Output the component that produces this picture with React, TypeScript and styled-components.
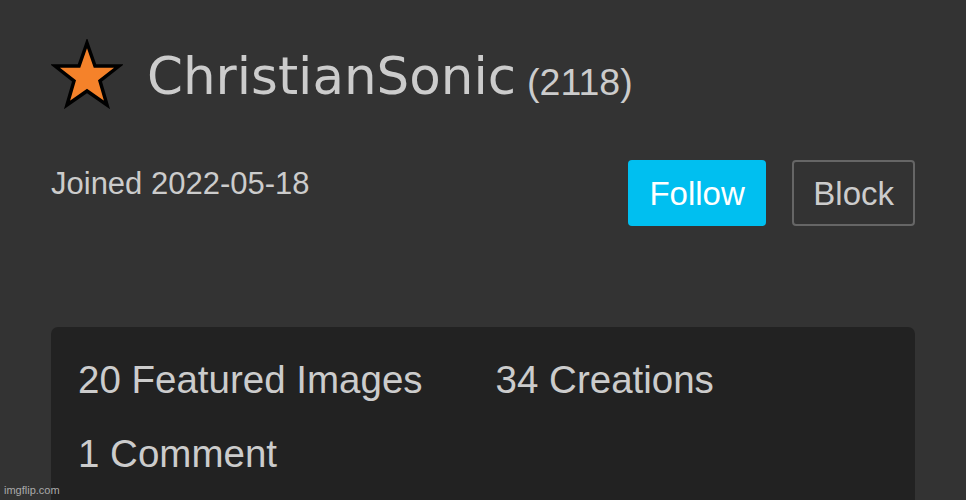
import React from 'react';
import styled, { createGlobalStyle } from 'styled-components';

const GlobalStyle = createGlobalStyle`
  html, body {
    margin: 0;
    padding: 0;
    background: #333333;
  }
  body {
    font-family: "Liberation Sans", Arial, sans-serif;
    color: #cccccc;
  }
`;

const Page = styled.div`
  position: relative;
  height: 500px;
  overflow: hidden;
  padding: 0 51px;
  box-sizing: border-box;
`;

const Header = styled.div`
  display: flex;
  align-items: center;
  padding-top: 40px;
  height: 74px;
`;

const StarIcon = styled.svg`
  width: 72px;
  height: 72px;
  flex-shrink: 0;
  margin-right: 24px;
  position: relative;
  top: -2px;
`;

const Username = styled.span`
  font-family: "DejaVu Sans", Verdana, sans-serif;
  font-size: 51.5px;
  line-height: 1;
  color: #cccccc;
`;

const Points = styled.span`
  font-size: 37.5px;
  margin-left: 11px;
  color: #cccccc;
  position: relative;
  top: 5px;
`;

const MetaRow = styled.div`
  display: flex;
  justify-content: space-between;
  align-items: flex-start;
  margin-top: 46px;
`;

const Joined = styled.div`
  font-size: 31px;
  line-height: 1;
  margin-top: 8px;
  color: #cccccc;
`;

const Actions = styled.div`
  display: flex;
  gap: 26px;
`;

const ActionButton = styled.button<{ $primary?: boolean }>`
  height: 66px;
  padding: 2px ${(p) => (p.$primary ? '21.5px' : '19px')} 0;
  font-family: "Liberation Sans", Arial, sans-serif;
  font-size: 33px;
  border-radius: 4px;
  box-sizing: border-box;
  cursor: pointer;
  background: ${(p) => (p.$primary ? '#00bff0' : 'transparent')};
  color: ${(p) => (p.$primary ? '#ffffff' : '#cccccc')};
  border: ${(p) => (p.$primary ? 'none' : '2px solid #666666')};
`;

const StatsCard = styled.div`
  margin-top: 101px;
  background: #222222;
  border-radius: 7px;
  padding: 34px 27px 0;
  height: 200px;
  box-sizing: border-box;
`;

const StatsRow = styled.div`
  display: flex;
  gap: 73px;
  margin-bottom: 35px;
`;

const Stat = styled.span`
  font-size: 38.5px;
  line-height: 1;
  color: #cccccc;
`;

const Watermark = styled.div`
  position: absolute;
  left: 4px;
  bottom: 4px;
  font-size: 11px;
  color: #aaaaaa;
`;

export default function App() {
  return (
    <>
      <GlobalStyle />
      <Page>
        <Header>
          <StarIcon viewBox="0 0 72 72">
            <polygon
              points="36,4 44,27 68,27 49,42 56,66 36,52 16,66 23,42 4,27 28,27"
              fill="#f5822a"
              stroke="#000000"
              strokeWidth="3.5"
              strokeLinejoin="miter"
            />
          </StarIcon>
          <Username>ChristianSonic</Username>
          <Points>(2118)</Points>
        </Header>
        <MetaRow>
          <Joined>Joined 2022-05-18</Joined>
          <Actions>
            <ActionButton $primary>Follow</ActionButton>
            <ActionButton>Block</ActionButton>
          </Actions>
        </MetaRow>
        <StatsCard>
          <StatsRow>
            <Stat>20 Featured Images</Stat>
            <Stat>34 Creations</Stat>
          </StatsRow>
          <StatsRow>
            <Stat>1 Comment</Stat>
          </StatsRow>
        </StatsCard>
        <Watermark>imgflip.com</Watermark>
      </Page>
    </>
  );
}
